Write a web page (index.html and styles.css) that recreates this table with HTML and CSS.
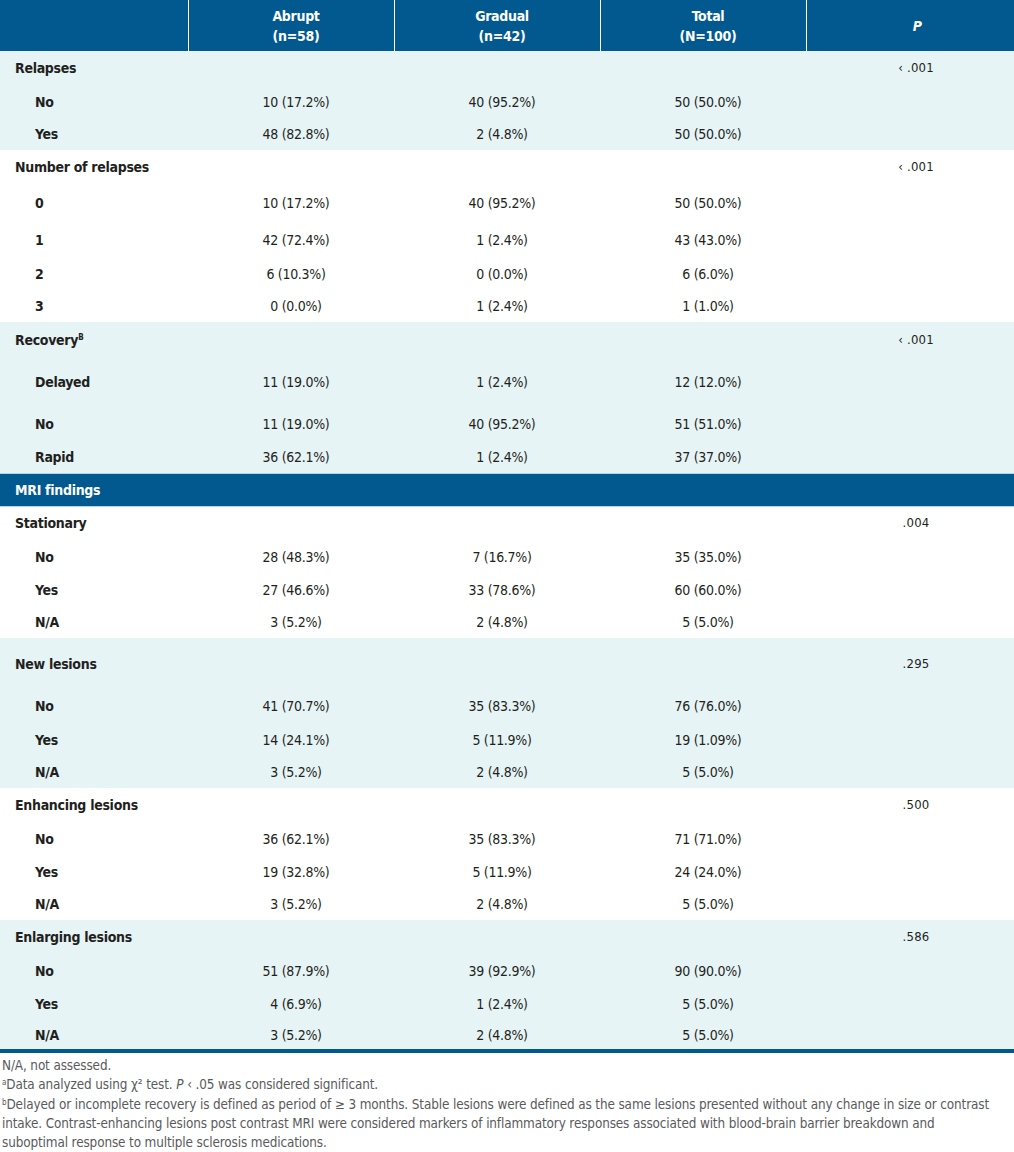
FILE: index.html
```html
<!DOCTYPE html>
<html lang="en">
<head>
<meta charset="utf-8">
<title>Table</title>
<link rel="stylesheet" href="styles.css">
</head>
<body>
<table class="tbl">
  <colgroup>
    <col class="c-label"><col class="c-data"><col class="c-data"><col class="c-data"><col class="c-p">
  </colgroup>
  <thead>
    <tr class="head">
      <th></th>
      <th>Abrupt<br>(n=58)</th>
      <th>Gradual<br>(n=42)</th>
      <th>Total<br>(N=100)</th>
      <th class="p-head">P</th>
    </tr>
  </thead>
  <tbody class="band">
    <tr class="h34"><td class="grp">Relapses</td><td></td><td></td><td></td><td class="pv">‹ .001</td></tr>
    <tr class="h33"><td class="sub">No</td><td>10 (17.2%)</td><td>40 (95.2%)</td><td>50 (50.0%)</td><td></td></tr>
    <tr class="h32"><td class="sub">Yes</td><td>48 (82.8%)</td><td>2 (4.8%)</td><td>50 (50.0%)</td><td></td></tr>
  </tbody>
  <tbody>
    <tr class="h34"><td class="grp">Number of relapses</td><td></td><td></td><td></td><td class="pv">‹ .001</td></tr>
    <tr class="h38"><td class="sub">0</td><td>10 (17.2%)</td><td>40 (95.2%)</td><td>50 (50.0%)</td><td></td></tr>
    <tr class="h35"><td class="sub">1</td><td>42 (72.4%)</td><td>1 (2.4%)</td><td>43 (43.0%)</td><td></td></tr>
    <tr class="h33"><td class="sub">2</td><td>6 (10.3%)</td><td>0 (0.0%)</td><td>6 (6.0%)</td><td></td></tr>
    <tr class="h32"><td class="sub">3</td><td>0 (0.0%)</td><td>1 (2.4%)</td><td>1 (1.0%)</td><td></td></tr>
  </tbody>
  <tbody class="band">
    <tr class="h36"><td class="grp">Recovery<sup class="sup">B</sup></td><td></td><td></td><td></td><td class="pv">‹ .001</td></tr>
    <tr class="h48"><td class="sub">Delayed</td><td>11 (19.0%)</td><td>1 (2.4%)</td><td>12 (12.0%)</td><td></td></tr>
    <tr class="h35"><td class="sub">No</td><td>11 (19.0%)</td><td>40 (95.2%)</td><td>51 (51.0%)</td><td></td></tr>
    <tr class="h32"><td class="sub">Rapid</td><td>36 (62.1%)</td><td>1 (2.4%)</td><td>37 (37.0%)</td><td></td></tr>
  </tbody>
  <tbody class="section">
    <tr class="h33"><td class="grp" colspan="5">MRI findings</td></tr>
  </tbody>
  <tbody>
    <tr class="h34"><td class="grp">Stationary</td><td></td><td></td><td></td><td class="pv">.004</td></tr>
    <tr class="h33"><td class="sub">No</td><td>28 (48.3%)</td><td>7 (16.7%)</td><td>35 (35.0%)</td><td></td></tr>
    <tr class="h33"><td class="sub">Yes</td><td>27 (46.6%)</td><td>33 (78.6%)</td><td>60 (60.0%)</td><td></td></tr>
    <tr class="h32"><td class="sub">N/A</td><td>3 (5.2%)</td><td>2 (4.8%)</td><td>5 (5.0%)</td><td></td></tr>
  </tbody>
  <tbody class="band">
    <tr class="h51"><td class="grp">New lesions</td><td></td><td></td><td></td><td class="pv">.295</td></tr>
    <tr class="h34"><td class="sub">No</td><td>41 (70.7%)</td><td>35 (83.3%)</td><td>76 (76.0%)</td><td></td></tr>
    <tr class="h33"><td class="sub">Yes</td><td>14 (24.1%)</td><td>5 (11.9%)</td><td>19 (1.09%)</td><td></td></tr>
    <tr class="h32"><td class="sub">N/A</td><td>3 (5.2%)</td><td>2 (4.8%)</td><td>5 (5.0%)</td><td></td></tr>
  </tbody>
  <tbody>
    <tr class="h34"><td class="grp">Enhancing lesions</td><td></td><td></td><td></td><td class="pv">.500</td></tr>
    <tr class="h33"><td class="sub">No</td><td>36 (62.1%)</td><td>35 (83.3%)</td><td>71 (71.0%)</td><td></td></tr>
    <tr class="h33"><td class="sub">Yes</td><td>19 (32.8%)</td><td>5 (11.9%)</td><td>24 (24.0%)</td><td></td></tr>
    <tr class="h32"><td class="sub">N/A</td><td>3 (5.2%)</td><td>2 (4.8%)</td><td>5 (5.0%)</td><td></td></tr>
  </tbody>
  <tbody class="band last">
    <tr class="h34"><td class="grp">Enlarging lesions</td><td></td><td></td><td></td><td class="pv">.586</td></tr>
    <tr class="h33"><td class="sub">No</td><td>51 (87.9%)</td><td>39 (92.9%)</td><td>90 (90.0%)</td><td></td></tr>
    <tr class="h33"><td class="sub">Yes</td><td>4 (6.9%)</td><td>1 (2.4%)</td><td>5 (5.0%)</td><td></td></tr>
    <tr class="h31"><td class="sub">N/A</td><td>3 (5.2%)</td><td>2 (4.8%)</td><td>5 (5.0%)</td><td></td></tr>
  </tbody>
</table>
<div class="notes">
  <p>N/A, not assessed.</p>
  <p><sup class="fn">a</sup>Data analyzed using χ² test. <i>P</i> ‹ .05 was considered significant.</p>
  <p><sup class="fn">b</sup>Delayed or incomplete recovery is defined as period of ≥ 3 months. Stable lesions were defined as the same lesions presented without any change in size or contrast<br>intake. Contrast-enhancing lesions post contrast MRI were considered markers of inflammatory responses associated with blood-brain barrier breakdown and<br>suboptimal response to multiple sclerosis medications.</p>
</div>
</body>
</html>
```

FILE: styles.css
```css
html, body {
  margin: 0;
  padding: 0;
  background: #ffffff;
}

body {
  width: 1014px;
  font-family: "DejaVu Sans Condensed", "DejaVu Sans", sans-serif;
  font-stretch: condensed;
  color: #231f20;
}

.tbl {
  width: 1014px;
  border-collapse: collapse;
  table-layout: fixed;
  font-size: 14px;
  letter-spacing: -0.3px;
}

.c-label { width: 188px; }
.c-data { width: 206px; }
.c-p { width: 208px; }

.head {
  height: 51px;
  background: #02598f;
}

.head th {
  color: #ffffff;
  font-weight: bold;
  font-size: 14px;
  line-height: 20px;
  text-align: center;
  vertical-align: middle;
  padding: 0 0 0 10px;
  border-left: 1px solid #ffffff;
}

.head th:first-child {
  border-left: none;
}

.head .p-head {
  font-style: italic;
  padding-left: 14px;
}

.tbl td {
  padding: 0 0 0 10px;
  text-align: center;
  vertical-align: middle;
  line-height: 18px;
  white-space: nowrap;
}

.tbl td.grp {
  text-align: left;
  font-weight: bold;
  padding-left: 15px;
}

.tbl td.sub {
  text-align: left;
  font-weight: bold;
  padding-left: 35px;
}

.tbl td.pv {
  font-size: 13px;
  letter-spacing: 0.2px;
  padding-left: 12px;
}

.band {
  background: #e6f4f6;
}

.section {
  background: #02598f;
  color: #ffffff;
  border-top: 1px solid #b7d3e1;
  border-bottom: 1px solid #b7d3e1;
}

.last {
  border-bottom: 4px solid #02598f;
}

.sup {
  font-size: 8px;
  vertical-align: top;
  position: relative;
  top: -2px;
}

.h31 { height: 31px; }
.h32 { height: 32px; }
.h33 { height: 33px; }
.h34 { height: 34px; }
.h35 { height: 35px; }
.h36 { height: 36px; }
.h38 { height: 38px; }
.h48 { height: 48px; }
.h51 { height: 51px; }

.notes {
  padding: 3px 0 0 2px;
  font-size: 13.4px;
  letter-spacing: -0.12px;
  line-height: 19.25px;
  color: #5a5a5c;
  white-space: nowrap;
}

.notes p {
  margin: 0;
}

.fn {
  font-size: 8px;
  vertical-align: top;
  position: relative;
  top: -2px;
}
```
